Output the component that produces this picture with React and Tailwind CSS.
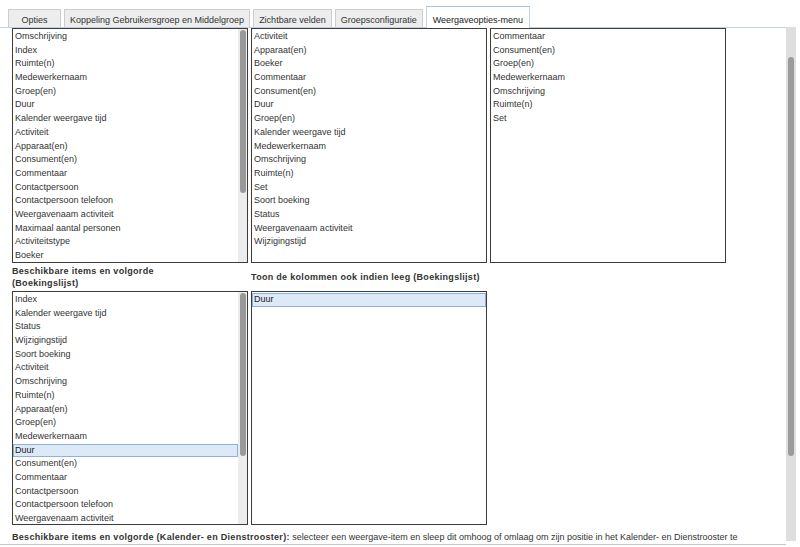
import React from "react";

const TABS = ["Opties", "Koppeling Gebruikersgroep en Middelgroep", "Zichtbare velden", "Groepsconfiguratie", "Weergaveopties-menu"];

const AVAILABLE = [
  "Omschrijving", "Index", "Ruimte(n)", "Medewerkernaam", "Groep(en)", "Duur", "Kalender weergave tijd",
  "Activiteit", "Apparaat(en)", "Consument(en)", "Commentaar", "Contactpersoon", "Contactpersoon telefoon",
  "Weergavenaam activiteit", "Maximaal aantal personen", "Activiteitstype", "Boeker", "Set",
];
const VISIBLE = [
  "Activiteit", "Apparaat(en)", "Boeker", "Commentaar", "Consument(en)", "Duur", "Groep(en)",
  "Kalender weergave tijd", "Medewerkernaam", "Omschrijving", "Ruimte(n)", "Set", "Soort boeking",
  "Status", "Weergavenaam activiteit", "Wijzigingstijd",
];
const GROUPED = ["Commentaar", "Consument(en)", "Groep(en)", "Medewerkernaam", "Omschrijving", "Ruimte(n)", "Set"];
const BOOKING = [
  "Index", "Kalender weergave tijd", "Status", "Wijzigingstijd", "Soort boeking", "Activiteit", "Omschrijving",
  "Ruimte(n)", "Apparaat(en)", "Groep(en)", "Medewerkernaam", "Duur", "Consument(en)", "Commentaar",
  "Contactpersoon", "Contactpersoon telefoon", "Weergavenaam activiteit", "Maximaal aantal personen",
];

function ListBox({ items, selected = -1, scroll = false }) {
  return (
    <div className="flex h-full overflow-hidden border border-[#3c3c3c] bg-white">
      <ul className="min-w-0 flex-1 pt-px">
        {items.map((it, i) => (
          <li key={i}
            className={i === selected
              ? "h-[13.7px] whitespace-nowrap border border-[#8eb1dc] bg-[#dde9f7] pl-[1px] leading-[11.7px] text-[#222]"
              : "h-[13.7px] whitespace-nowrap pl-[2px] leading-[13.7px]"}>
            {it}
          </li>
        ))}
      </ul>
      {scroll && (
        <div className="flex w-[9px] shrink-0 justify-center bg-[#ececec]">
          <div className="mt-px h-[163px] w-[6px] rounded-[3px] bg-[#999]" />
        </div>
      )}
    </div>
  );
}

export default function App() {
  return (
    <div className="flex h-[547px] w-[800px] overflow-hidden bg-white font-['Liberation_Sans',Arial,sans-serif] text-[9px] text-[#333]">
      <div className="flex w-[786px] flex-col">
        <div className="flex h-[27px] items-end gap-[3px] pl-[8px]">
          {TABS.map((t, i) => i === TABS.length - 1 ? (
            <div key={t} className="relative z-10 -mb-px h-[22px] whitespace-nowrap border border-b-0 border-[#c4d3e4] border-t-[#a9c2e0] bg-white px-[6px] pt-[7px] leading-[12px] text-[#222]">
              {t}
            </div>
          ) : (
            <div key={t} className={`h-[18px] whitespace-nowrap border border-b-0 border-[#cdcdcd] bg-[#ededed] px-[5px] pt-[4px] text-center leading-[12px] ${i === 0 ? "min-w-[53px]" : ""}`}>
              {t}
            </div>
          ))}
        </div>
        <div className="h-[518px] overflow-hidden border-y border-t-[#c3d2e2] border-b-[#c8c8c8] pl-[12px]">
          <div className="grid grid-cols-[236px_236px_236px] grid-rows-[235px_28px_234px] gap-x-[3px]">
            <ListBox items={AVAILABLE} scroll />
            <ListBox items={VISIBLE} />
            <ListBox items={GROUPED} />
            <div className="self-center font-bold leading-[12px] tracking-[0.3px]">
              Beschikbare items en volgorde<br />(Boekingslijst)
            </div>
            <div className="col-span-2 self-center whitespace-nowrap font-bold leading-[12px] tracking-[0.3px]">
              Toon de kolommen ook indien leeg (Boekingslijst)
            </div>
            <ListBox items={BOOKING} selected={11} scroll />
            <ListBox items={["Duur"]} selected={0} />
            <div />
          </div>
          <p className="mt-[6px] pr-[10px] leading-[12px]">
            <span className="font-bold tracking-[0.3px]">Beschikbare items en volgorde (Kalender- en Dienstrooster):</span>{" "}
            selecteer een weergave-item en sleep dit omhoog of omlaag om zijn positie in het Kalender- en Dienstrooster te veranderen.
          </p>
        </div>
      </div>
      <div className="mt-[27px] flex h-[514px] w-[10px] justify-center bg-[#dedede]">
        <div className="mt-[30px] h-[399px] w-[6px] rounded-[3px] bg-[#9b9b9b]" />
      </div>
    </div>
  );
}
